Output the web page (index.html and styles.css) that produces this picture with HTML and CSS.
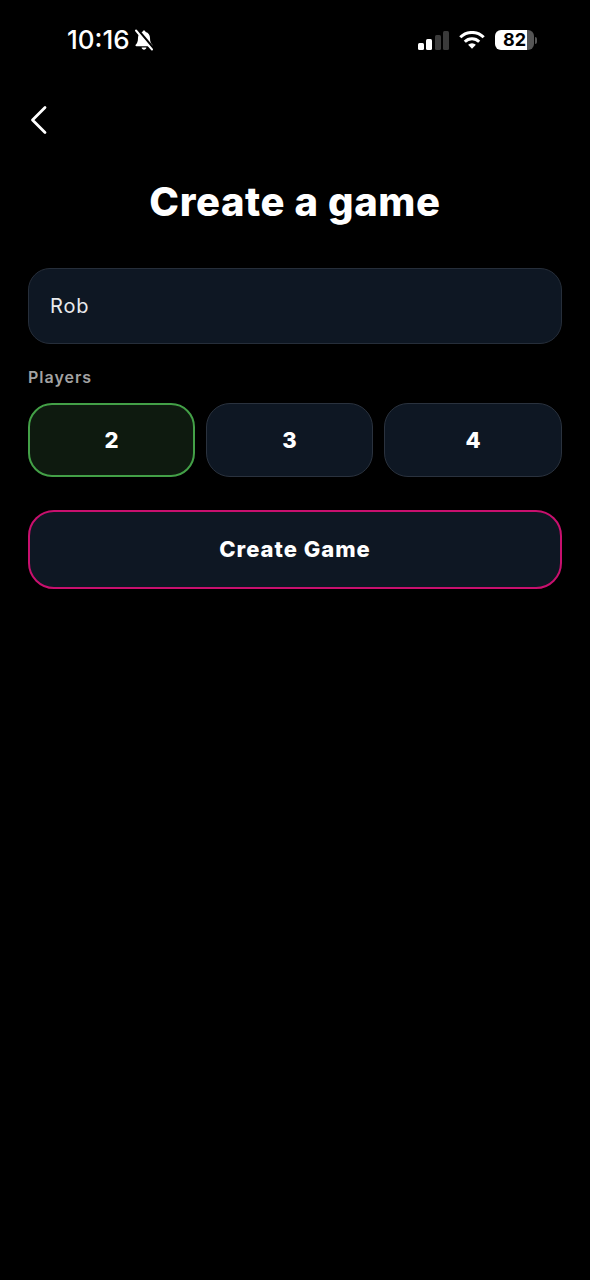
FILE: index.html
```html
<!DOCTYPE html>
<html lang="en">
<head>
    <meta charset="UTF-8">
    <meta name="viewport" content="width=device-width, initial-scale=1.0">
    <title>Create a game</title>
    <link rel="stylesheet" href="styles.css">
</head>
<body>
    <div class="status-bar">
        <div class="status-left">
            <span class="clock">10:16</span>
            <svg class="bell" width="20" height="22" viewBox="0 0 20 22">
                <path d="M10 1.500c.9 0 1.500.6 1.600 1.500 2.900.7 4.400 3 4.400 6 0 3.600 1 5.400 2.300 6.800.5.6.2 1.400-.7 1.400H2.400c-.9 0-1.200-.8-.7-1.400C3 14.400 4 12.600 4 9c0-3 1.500-5.300 4.400-6 .1-.9.7-1.500 1.600-1.500z" fill="#fff"/>
                <path d="M7.600 18.600h4.800c-.2 1.300-1.200 2.100-2.400 2.100s-2.200-.8-2.400-2.100z" fill="#fff"/>
                <path d="M3.500 .5 19.500 19.500" stroke="#000" stroke-width="2.600"/>
                <path d="M2 1.500 18 20.500" stroke="#fff" stroke-width="2" stroke-linecap="round"/>
            </svg>
        </div>
        <div class="status-right">
            <div class="signal">
                <span class="bar bar-1"></span>
                <span class="bar bar-2"></span>
                <span class="bar bar-3"></span>
                <span class="bar bar-4"></span>
            </div>
            <svg class="wifi" width="26" height="18" viewBox="0 0 26 18">
                <path d="M1.300 6.300A16.500 16.500 0 0 1 24.700 6.300" fill="none" stroke="#fff" stroke-width="3"/>
                <path d="M5.800 10.700a10.200 10.200 0 0 1 14.400 0" fill="none" stroke="#fff" stroke-width="3"/>
                <path d="M13 17.800 9.100 13.800a5.600 5.600 0 0 1 7.800 0z" fill="#fff"/>
            </svg>
            <div class="battery">
                <div class="battery-body"><span class="battery-text">82</span></div>
                <span class="battery-cap"></span>
            </div>
        </div>
    </div>

    <div class="page">
        <svg class="back" width="20" height="30" viewBox="0 0 20 30">
            <path d="M16 2.500 3.500 15 16 27.500" fill="none" stroke="#fff" stroke-width="2.800" stroke-linecap="round" stroke-linejoin="round"/>
        </svg>

        <h1>Create a game</h1>

        <div class="name-input">Rob</div>

        <div class="field-label">Players</div>
        <div class="player-options">
            <div class="option selected">2</div>
            <div class="option">3</div>
            <div class="option">4</div>
        </div>

        <div class="create-button">Create Game</div>
    </div>
</body>
</html>
```

FILE: styles.css
```css
* {
    box-sizing: border-box;
}
body {
    font-family: Inter, "Liberation Sans", sans-serif;
    margin: 0;
    padding: 0;
    background-color: #000;
    color: #fff;
    height: 1280px;
    overflow: hidden;
}
.status-bar {
    height: 80px;
    padding: 0 53px 0 67px;
    display: flex;
    align-items: center;
    justify-content: space-between;
}
.status-left {
    display: flex;
    align-items: center;
    gap: 4px;
}
.clock {
    font-size: 26px;
    font-weight: 500;
    line-height: 30px;
}
.status-right {
    display: flex;
    align-items: center;
    gap: 10px;
}
.signal {
    display: flex;
    align-items: flex-end;
    gap: 2.400px;
    height: 19px;
    margin-top: 1px;
}
.bar {
    width: 6px;
    border-radius: 1.500px;
    background-color: #fff;
}
.bar-1 {
    height: 7px;
}
.bar-2 {
    height: 11px;
}
.bar-3 {
    height: 15px;
    background-color: #3a3a3a;
}
.bar-4 {
    height: 19px;
    background-color: #3a3a3a;
}
.battery {
    display: flex;
    align-items: center;
    gap: 1px;
}
.battery-body {
    width: 39px;
    height: 20px;
    border-radius: 6px;
    background: linear-gradient(to right, #fff 82%, #555 82%);
    display: flex;
    align-items: center;
    justify-content: center;
}
.battery-text {
    color: #000;
    font-size: 18px;
    font-weight: 700;
    line-height: 20px;
}
.battery-cap {
    width: 2px;
    height: 7px;
    border-radius: 0 2px 2px 0;
    background-color: #555;
}
.page {
    padding: 0 28px;
}
.back {
    display: block;
    margin: 25px 0 0 1px;
}
h1 {
    margin: 44px 0 0;
    font-size: 40px;
    font-weight: 800;
    letter-spacing: 0.6px;
    line-height: 46px;
    text-align: center;
}
.name-input {
    margin-top: 43px;
    height: 76px;
    padding: 0 21px;
    display: flex;
    align-items: center;
    background-color: #0e1723;
    border: 1px solid #262e3a;
    border-radius: 22px;
    font-size: 20px;
    letter-spacing: 0.9px;
    color: #e8eaec;
}
.field-label {
    margin-top: 23px;
    font-size: 16px;
    font-weight: 600;
    letter-spacing: 1px;
    line-height: 20px;
    color: #a3a3a3;
}
.player-options {
    margin-top: 16px;
    display: grid;
    grid-template-columns: 167px 167px 178px;
    gap: 11px;
}
.option {
    height: 74px;
    padding-bottom: 1px;
    display: flex;
    align-items: center;
    justify-content: center;
    background-color: #0e1723;
    border: 1px solid #2a323e;
    border-radius: 24px;
    font-size: 22px;
    font-weight: 800;
}
.option.selected {
    background-color: #0e1a0f;
    border: 2px solid #43a047;
}
.create-button {
    margin-top: 33px;
    height: 79px;
    padding-bottom: 2px;
    display: flex;
    align-items: center;
    justify-content: center;
    background-color: #0e1723;
    border: 2px solid #c8106e;
    border-radius: 26px;
    font-size: 22px;
    font-weight: 800;
    letter-spacing: 1px;
}
```
